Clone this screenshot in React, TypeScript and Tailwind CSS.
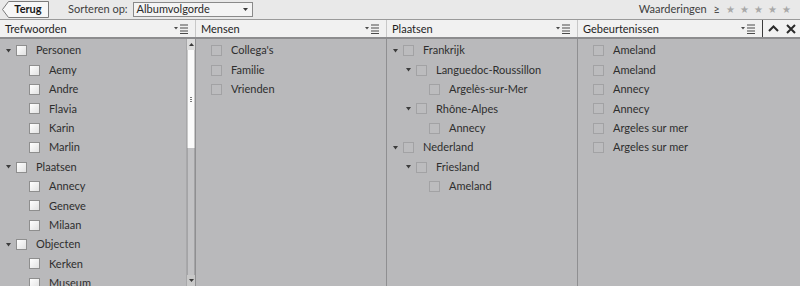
import { ReactNode } from "react";

type Item = { label: string; level: number; toggle?: boolean };

const trefwoorden: Item[] = [
  { label: "Personen", level: 0, toggle: true },
  { label: "Aemy", level: 1 },
  { label: "Andre", level: 1 },
  { label: "Flavia", level: 1 },
  { label: "Karin", level: 1 },
  { label: "Marlin", level: 1 },
  { label: "Plaatsen", level: 0, toggle: true },
  { label: "Annecy", level: 1 },
  { label: "Geneve", level: 1 },
  { label: "Milaan", level: 1 },
  { label: "Objecten", level: 0, toggle: true },
  { label: "Kerken", level: 1 },
  { label: "Museum", level: 1 },
];

const mensen: Item[] = [
  { label: "Collega's", level: 0 },
  { label: "Familie", level: 0 },
  { label: "Vrienden", level: 0 },
];

const plaatsen: Item[] = [
  { label: "Frankrijk", level: 0, toggle: true },
  { label: "Languedoc-Roussillon", level: 1, toggle: true },
  { label: "Argelès-sur-Mer", level: 2 },
  { label: "Rhône-Alpes", level: 1, toggle: true },
  { label: "Annecy", level: 2 },
  { label: "Nederland", level: 0, toggle: true },
  { label: "Friesland", level: 1, toggle: true },
  { label: "Ameland", level: 2 },
];

const gebeurtenissen: Item[] = [
  { label: "Ameland", level: 0 },
  { label: "Ameland", level: 0 },
  { label: "Annecy", level: 0 },
  { label: "Annecy", level: 0 },
  { label: "Argeles sur mer", level: 0 },
  { label: "Argeles sur mer", level: 0 },
];

const Triangle = () => (
  <svg width="5" height="4" viewBox="0 0 5 4" className="shrink-0">
    <polygon points="0,0 5,0 2.5,3.5" fill="#3c3c3c" />
  </svg>
);

const Row = ({ item, light, base }: { item: Item; light?: boolean; base: number }) => (
  <div className="flex h-[19.4px] items-center" style={{ paddingLeft: base + item.level * 13 }}>
    <div className="flex w-[10px] shrink-0 justify-start">{item.toggle && <Triangle />}</div>
    <div
      className={
        light
          ? "h-[11px] w-[11px] shrink-0 border border-[#8e8e8e] bg-gradient-to-br from-[#ffffff] to-[#e2e2e2]"
          : "h-[11px] w-[11px] shrink-0 border border-[#a2a2a4] bg-[#bcbcbe]"
      }
    />
    <span className="ml-[9px] whitespace-nowrap text-[#2e2e2e]">{item.label}</span>
  </div>
);

const MenuIcon = () => (
  <svg width="14" height="10" viewBox="0 0 14 10" className="shrink-0">
    <polygon points="0,3 4,3 2,5.5" fill="#4a4a4a" />
    <rect x="6" y="0.5" width="8" height="1" fill="#4a4a4a" />
    <rect x="6" y="3.5" width="8" height="1" fill="#4a4a4a" />
    <rect x="6" y="6.5" width="8" height="1" fill="#4a4a4a" />
    <rect x="6" y="9" width="8" height="1" fill="#4a4a4a" />
  </svg>
);

const HeaderCell = ({ title, width, last }: { title: string; width: string; last?: boolean }) => (
  <div className={`${width} flex h-full items-center justify-between pl-[5px] pr-[7px] ${last ? "border-r border-[#3a3a3a]" : "border-r border-[#c8c8c8]"}`}>
    <span className="pt-[2px] text-[#1e1e1e]">{title}</span>
    <MenuIcon />
  </div>
);

const Column = ({ width, children, border = true }: { width: string; children: ReactNode; border?: boolean }) => (
  <div className={`${width} h-full overflow-hidden pt-[2px] ${border ? "border-r border-[#8f8f91]" : ""}`}>{children}</div>
);

const Star = () => <span className="text-[10px] text-[#a8a8a8]">★</span>;

export default function App() {
  return (
    <div
      className="flex h-[286px] w-[800px] flex-col overflow-hidden bg-[#b9b9bb] text-[11px]"
      style={{ fontFamily: 'Lato, "Liberation Sans", Arial, sans-serif' }}
    >
      {/* top bar */}
      <div className="flex h-[20px] items-center border-b border-[#9a9a9a] bg-[#e9e9e9] pl-[2px] pr-[9px]">
        <div className="relative flex h-[17px] w-[47px] items-center justify-center pl-[5px]">
          <svg width="47" height="17" viewBox="0 0 47 17" className="absolute inset-0">
            <polygon points="6.5,0.5 46.5,0.5 46.5,16.5 6.5,16.5 0.5,8.5" fill="#f7f7f7" stroke="#7a7a7a" />
          </svg>
          <span className="relative font-bold text-[#1a1a1a]">Terug</span>
        </div>
        <span className="ml-[19px] text-[#3e3e3e]">Sorteren op:</span>
        <div className="ml-[5px] flex h-[15px] w-[120px] items-center justify-between border border-[#8a8a8a] bg-[#f4f4f4] pl-[3px] pr-[4px]">
          <span className="text-[#2a2a2a]">Albumvolgorde</span>
          <svg width="5" height="3" viewBox="0 0 5 3">
            <polygon points="0,0 5,0 2.5,3" fill="#3a3a3a" />
          </svg>
        </div>
        <div className="ml-auto flex items-center">
          <span className="text-[#3e3e3e]">Waarderingen</span>
          <span className="ml-[7px] text-[#4a4a4a]">≥</span>
          <div className="ml-[6px] flex gap-[5px]">
            <Star />
            <Star />
            <Star />
            <Star />
            <Star />
          </div>
        </div>
      </div>

      {/* header */}
      <div className="flex h-[19px] items-center border-b-2 border-[#8c8c8e] bg-[#f1f1f1]">
        <HeaderCell title="Trefwoorden" width="w-[196px]" />
        <HeaderCell title="Mensen" width="w-[191px]" />
        <HeaderCell title="Plaatsen" width="w-[191px]" />
        <HeaderCell title="Gebeurtenissen" width="w-[185px]" last />
        <div className="flex h-full flex-1 items-center justify-center gap-[7px]">
          <svg width="11" height="7" viewBox="0 0 11 7">
            <polyline points="1,6 5.5,1.5 10,6" fill="none" stroke="#2a2a2a" strokeWidth="2" />
          </svg>
          <svg width="10" height="10" viewBox="0 0 10 10">
            <path d="M1 1 L9 9 M9 1 L1 9" stroke="#2a2a2a" strokeWidth="2" />
          </svg>
        </div>
      </div>

      {/* body */}
      <div className="flex flex-1 overflow-hidden">
        <div className="flex h-full w-[196px] border-r border-[#8f8f91]">
          <div className="flex-1 overflow-hidden pt-[2px]">
            {trefwoorden.map((it, i) => (
              <Row key={i} item={it} light base={6} />
            ))}
          </div>
          <div className="flex h-full w-[9px] flex-col border-l border-[#a8a8aa]">
            <div className="flex h-[11px] items-center justify-center bg-[#dcdcdc]">
              <svg width="5" height="3" viewBox="0 0 5 3">
                <polygon points="0,3 5,3 2.5,0" fill="#3a3a3a" />
              </svg>
            </div>
            <div className="flex h-[98px] flex-col items-center justify-center gap-[1px] border-x border-[#c8c8c8] bg-[#fbfbfb]">
              <div className="h-[1px] w-[2px] bg-[#777]" />
              <div className="h-[1px] w-[2px] bg-[#777]" />
              <div className="h-[1px] w-[2px] bg-[#777]" />
            </div>
            <div className="flex-1 border-x border-[#a4a4a6] bg-[#c2c2c4]" />
            <div className="flex h-[11px] items-center justify-center bg-[#c8c8c8]">
              <svg width="5" height="3" viewBox="0 0 5 3">
                <polygon points="0,0 5,0 2.5,3" fill="#3a3a3a" />
              </svg>
            </div>
          </div>
        </div>
        <Column width="w-[191px]">
          {mensen.map((it, i) => (
            <Row key={i} item={it} base={5} />
          ))}
        </Column>
        <Column width="w-[191px]">
          {plaatsen.map((it, i) => (
            <Row key={i} item={it} base={6} />
          ))}
        </Column>
        <Column width="w-[185px]" border={false}>
          {gebeurtenissen.map((it, i) => (
            <Row key={i} item={it} base={5} />
          ))}
        </Column>
      </div>
    </div>
  );
}
